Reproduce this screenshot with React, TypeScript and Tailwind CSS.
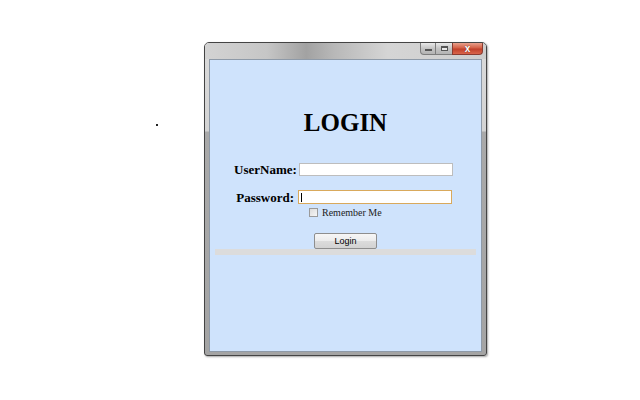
import React from "react";

const serif = "font-['Liberation_Serif','Times_New_Roman',serif]";

const CaptionButtons = () => (
  <div className="flex h-[12px] mr-[3px]">
    <div className="w-[16px] h-full flex items-center justify-center border border-[#7d7d7d] border-t-0 rounded-bl-[4px] bg-[linear-gradient(180deg,#e9e9e9,#c4c4c4_50%,#b3b3b3)]">
      <div className="w-[7px] h-[2px] bg-white border border-[#555] mt-[3px]"></div>
    </div>
    <div className="w-[16px] h-full flex items-center justify-center border-y border-[#7d7d7d] border-t-0 bg-[linear-gradient(180deg,#e9e9e9,#c4c4c4_50%,#b3b3b3)]">
      <div className="w-[7px] h-[5px] border border-[#555] border-t-2 bg-[#e8e8e8]"></div>
    </div>
    <div className="w-[31px] h-full flex items-center justify-center border border-[#8a3b30] border-t-0 rounded-br-[4px] bg-[linear-gradient(180deg,#e8a08c,#d45f45_45%,#c0402a_55%,#d9644a)]">
      <span className="text-white text-[10px] leading-none font-bold font-['Liberation_Sans',sans-serif] [text-shadow:0_0_1px_#5a1a10]">x</span>
    </div>
  </div>
);

export default function App() {
  return (
    <div className="relative w-[640px] h-[400px] bg-white pt-[42px] pl-[204px]">
      <div className="absolute left-[156px] top-[124px] w-[2px] h-[2px] bg-[#222]"></div>

      <div className="w-[283px] h-[314px] flex flex-col border border-[#444] rounded-t-[5px] rounded-b-[3px] bg-[linear-gradient(180deg,#dadada_0px,#d3d3d3_88px,#a9a9a9_89px,#a4a4a4_100%)] shadow-[1px_1px_2px_rgba(0,0,0,0.35)] overflow-hidden">
        <div className="h-[16px] flex justify-end bg-[linear-gradient(90deg,#d3d3d3_0%,#c6c6c6_22%,#a2a2a2_36%,#b8b8b8_46%,#d5d5d5_65%,#cdcdcd_100%)]">
          <CaptionButtons />
        </div>
        <div className="flex-1 mx-[4px] mb-[3px] border border-[#8e9aa8] bg-[#cfe3fc] flex flex-col">
          <h1 className={`${serif} mt-[49px] text-center text-[25px] leading-[28px] font-bold text-black`}>LOGIN</h1>

          <div className={`${serif} ml-[24px] mt-[25px] flex flex-col`}>
            <div className="flex items-center h-[14px] gap-[4px]">
              <span className="w-[61px] text-right text-[13px] font-bold leading-none whitespace-nowrap">UserName:</span>
              <div className="w-[154px] h-[13px] bg-white border border-[#bdbdbd]"></div>
            </div>
            <div className="flex items-center h-[14px] gap-[4px] mt-[14px]">
              <span className="w-[60px] text-right text-[13px] font-bold leading-none whitespace-nowrap">Password:</span>
              <div className="w-[154px] h-[14px] bg-white border border-[#d9a95c] flex items-center pl-[2px]">
                <div className="w-[1px] h-[9px] bg-black"></div>
              </div>
            </div>
            <div className="flex items-center ml-[75px] mt-[3px] h-[11px] gap-[4px]">
              <div className="w-[9px] h-[9px] border border-[#9a9a9a] bg-[linear-gradient(135deg,#dcdcdc,#f6f6f6)]"></div>
              <span className="text-[10px] leading-none text-[#222]">Remember Me</span>
            </div>
          </div>

          <div className="flex justify-center mt-[15px]">
            <button className="w-[63px] h-[16px] border border-[#8e8e8e] rounded-[2px] bg-[linear-gradient(180deg,#f6f6f6,#ececec_50%,#dcdcdc_51%,#d2d2d2)] text-[9px] leading-none text-black font-['Liberation_Sans',Arial,sans-serif]">
              Login
            </button>
          </div>
          <div className="mx-[5px] h-[6px] bg-[#dcdcdc]"></div>
        </div>
      </div>
    </div>
  );
}
